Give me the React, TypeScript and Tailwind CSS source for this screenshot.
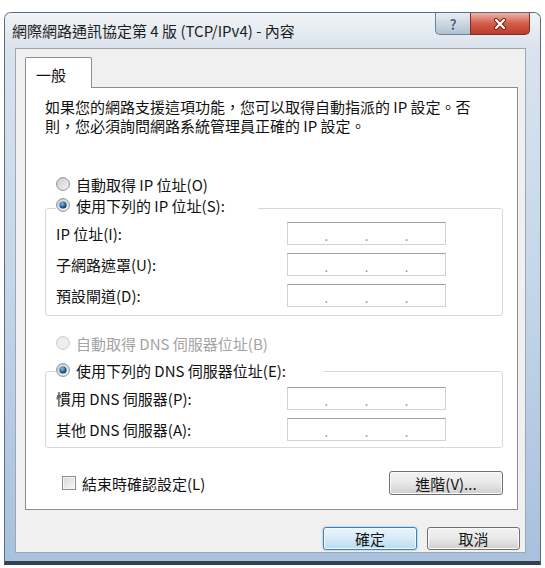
import type { ReactNode } from 'react';

const font = "font-['Noto_Sans_CJK_TC','Noto_Sans_CJK_JP',sans-serif]";

function Radio({ checked, disabled }: { checked?: boolean; disabled?: boolean }) {
  return (
    <svg width="14" height="14" viewBox="0 0 14 14" className="shrink-0">
      <defs>
        <linearGradient id="rb-bg" x1="0" y1="0" x2="1" y2="1">
          <stop offset="0" stopColor="#c9c9c9" />
          <stop offset="1" stopColor="#f7f7f7" />
        </linearGradient>
        <radialGradient id="rb-dot" cx="0.4" cy="0.35" r="0.7">
          <stop offset="0" stopColor="#8fc3ee" />
          <stop offset="0.55" stopColor="#2c6aa6" />
          <stop offset="1" stopColor="#0d2f55" />
        </radialGradient>
      </defs>
      <circle cx="7" cy="7" r="6.4" fill={disabled ? '#eeeeee' : 'url(#rb-bg)'} stroke={disabled ? '#c8c8c8' : '#8c8f94'} strokeWidth="1" />
      {checked && <circle cx="7" cy="7" r="3.6" fill="url(#rb-dot)" />}
    </svg>
  );
}

function Check() {
  return (
    <span className="block h-[14px] w-[14px] shrink-0 border border-[#8e8f8f] bg-linear-to-br from-[#d6d6d6] to-[#f8f8f8] shadow-[inset_0_0_0_1px_#f4f4f4]" />
  );
}

function IpBox() {
  return (
    <div className="flex h-[23px] w-[159px] items-center border border-[#cfd2d6] border-t-[#9b9ea4] bg-white pt-[4px] text-[13px] leading-none text-[#8a8a8a]">
      <span className="flex-1" />
      <span>.</span>
      <span className="flex-1" />
      <span>.</span>
      <span className="flex-1" />
      <span>.</span>
      <span className="flex-1" />
    </div>
  );
}

function Btn({ children, className }: { children: ReactNode; className: string }) {
  return (
    <button className={`flex items-center justify-center rounded-[3px] border text-[15px] leading-none text-[#151515] ${className}`}>
      {children}
    </button>
  );
}

const ipRows = ['IP 位址(I):', '子網路遮罩(U):', '預設閘道(D):'];
const dnsRows = ['慣用 DNS 伺服器(P):', '其他 DNS 伺服器(A):'];

export default function App() {
  return (
    <div className={`min-h-screen bg-white pl-[4px] pt-[12px] ${font}`}>
      <div className="flex h-[553px] w-[537px] flex-col rounded-t-[7px] border border-[#5d6d7e] border-b-[4px] border-b-[#34424f] bg-linear-to-b from-[#dde5ee] via-[#c4d6e9] to-[#a8c1dc]">
        {/* title bar */}
        <div className="flex h-[35px] items-start justify-between rounded-t-[6px] bg-linear-to-b from-[#f1f4f7] to-[#dbe3ec] pl-[7px] pr-[10px]">
          <div className="self-center text-[15px] leading-[18px] text-[#1d1d1d]">網際網路通訊協定第 4 版 (TCP/IPv4) - 內容</div>
          <div className="flex">
            <div className="flex h-[22px] w-[35px] items-center justify-center rounded-bl-[5px] border border-r-0 border-t-0 border-[#6f8092] bg-linear-to-b from-[#e9eef4] via-[#ccd7e2] to-[#b2c1d0] text-[14px] font-bold leading-none text-[#56667a] [text-shadow:0_0_2px_#ffffff]">
              ?
            </div>
            <div className="flex h-[22px] w-[60px] items-center justify-center rounded-br-[5px] border border-t-0 border-[#7d3025] bg-linear-to-b from-[#eab3a8] via-[#d35c4a] to-[#bd3b2a]">
              <svg width="14" height="12" viewBox="0 0 14 12">
                <path d="M3 2 L11 10 M11 2 L3 10" stroke="#6e2016" strokeWidth="4" strokeLinecap="round" />
                <path d="M3 2 L11 10 M11 2 L3 10" stroke="#ffffff" strokeWidth="2.2" strokeLinecap="round" />
              </svg>
            </div>
          </div>
        </div>

        {/* client area */}
        <div className="mb-[8px] ml-[10px] mr-[14px] flex flex-1 flex-col border border-[#9ba7b4] bg-[#f0f0f0] pl-[9px] pr-[5px] pt-[8px]">
          <div className="relative z-10 -mb-px flex h-[31px] w-[67px] items-center rounded-t-[2px] border border-b-0 border-[#8c8e94] bg-white pl-[10px] pt-[2px] text-[15px] leading-none text-[#111]">
            一般
          </div>
          <div className="mr-[2px] h-[423px] border border-[#8c8e94] bg-white pl-[19px] pr-[14px] pt-[9px] text-[15px] text-[#111]">
            <div className="whitespace-nowrap leading-[19px]">
              <div>如果您的網路支援這項功能，您可以取得自動指派的 IP 設定。否</div>
              <div>則，您必須詢問網路系統管理員正確的 IP 設定。</div>
            </div>

            <div className="mt-[39px] flex h-[20px] items-center gap-[6px] pl-[11px] leading-none">
              <Radio />
              <span>自動取得 IP 位址(O)</span>
            </div>

            <fieldset className="mt-[1px] rounded-[3px] border border-[#d5d9de] pb-[8px] pl-[10px] pt-[1px]">
              <legend className="pb-[6px] pr-[33px]">
                <span className="flex h-[20px] items-center gap-[6px] leading-none">
                  <Radio checked />
                  <span>使用下列的 IP 位址(S):</span>
                </span>
              </legend>
              <div className="grid grid-cols-[231px_159px] items-center gap-y-[8px] leading-none">
                {ipRows.map((r) => (
                  <div key={r} className="contents">
                    <span>{r}</span>
                    <IpBox />
                  </div>
                ))}
              </div>
            </fieldset>

            <div className="mt-[17px] flex h-[20px] items-center gap-[6px] pl-[11px] leading-none text-[#a3a3a3]">
              <Radio disabled />
              <span>自動取得 DNS 伺服器位址(B)</span>
            </div>

            <fieldset className="mt-[7px] rounded-[3px] border border-[#d5d9de] pb-[6px] pl-[10px] pt-[5px]">
              <legend className="pb-[2px] pr-[38px]">
                <span className="flex h-[20px] items-center gap-[6px] leading-none">
                  <Radio checked />
                  <span>使用下列的 DNS 伺服器位址(E):</span>
                </span>
              </legend>
              <div className="grid grid-cols-[231px_159px] items-center gap-y-[8px] leading-none">
                {dnsRows.map((r) => (
                  <div key={r} className="contents">
                    <span>{r}</span>
                    <IpBox />
                  </div>
                ))}
              </div>
            </fieldset>

            <div className="mt-[23px] flex h-[24px] items-center justify-between pl-[17px] leading-none">
              <span className="flex items-center gap-[6px]">
                <Check />
                <span>結束時確認設定(L)</span>
              </span>
              <Btn className="h-[24px] w-[114px] border-[#707070] bg-linear-to-b from-[#f3f3f3] via-[#e8e8e8] to-[#cfcfcf] shadow-[inset_0_0_0_1px_#fbfbfb]">
                進階(V)...
              </Btn>
            </div>
          </div>

          <div className="mt-[17px] flex justify-end gap-[10px]">
            <Btn className="h-[23px] w-[94px] border-[#3c7fb1] bg-linear-to-b from-[#eaf5fc] via-[#d6ebf8] to-[#b9dbf1] shadow-[0_0_2px_#6aaee6,inset_0_0_0_1px_#f4fbff]">
              確定
            </Btn>
            <Btn className="h-[23px] w-[93px] border-[#707070] bg-linear-to-b from-[#f3f3f3] via-[#e8e8e8] to-[#cfcfcf] shadow-[inset_0_0_0_1px_#fbfbfb]">
              取消
            </Btn>
          </div>
        </div>
      </div>
    </div>
  );
}
